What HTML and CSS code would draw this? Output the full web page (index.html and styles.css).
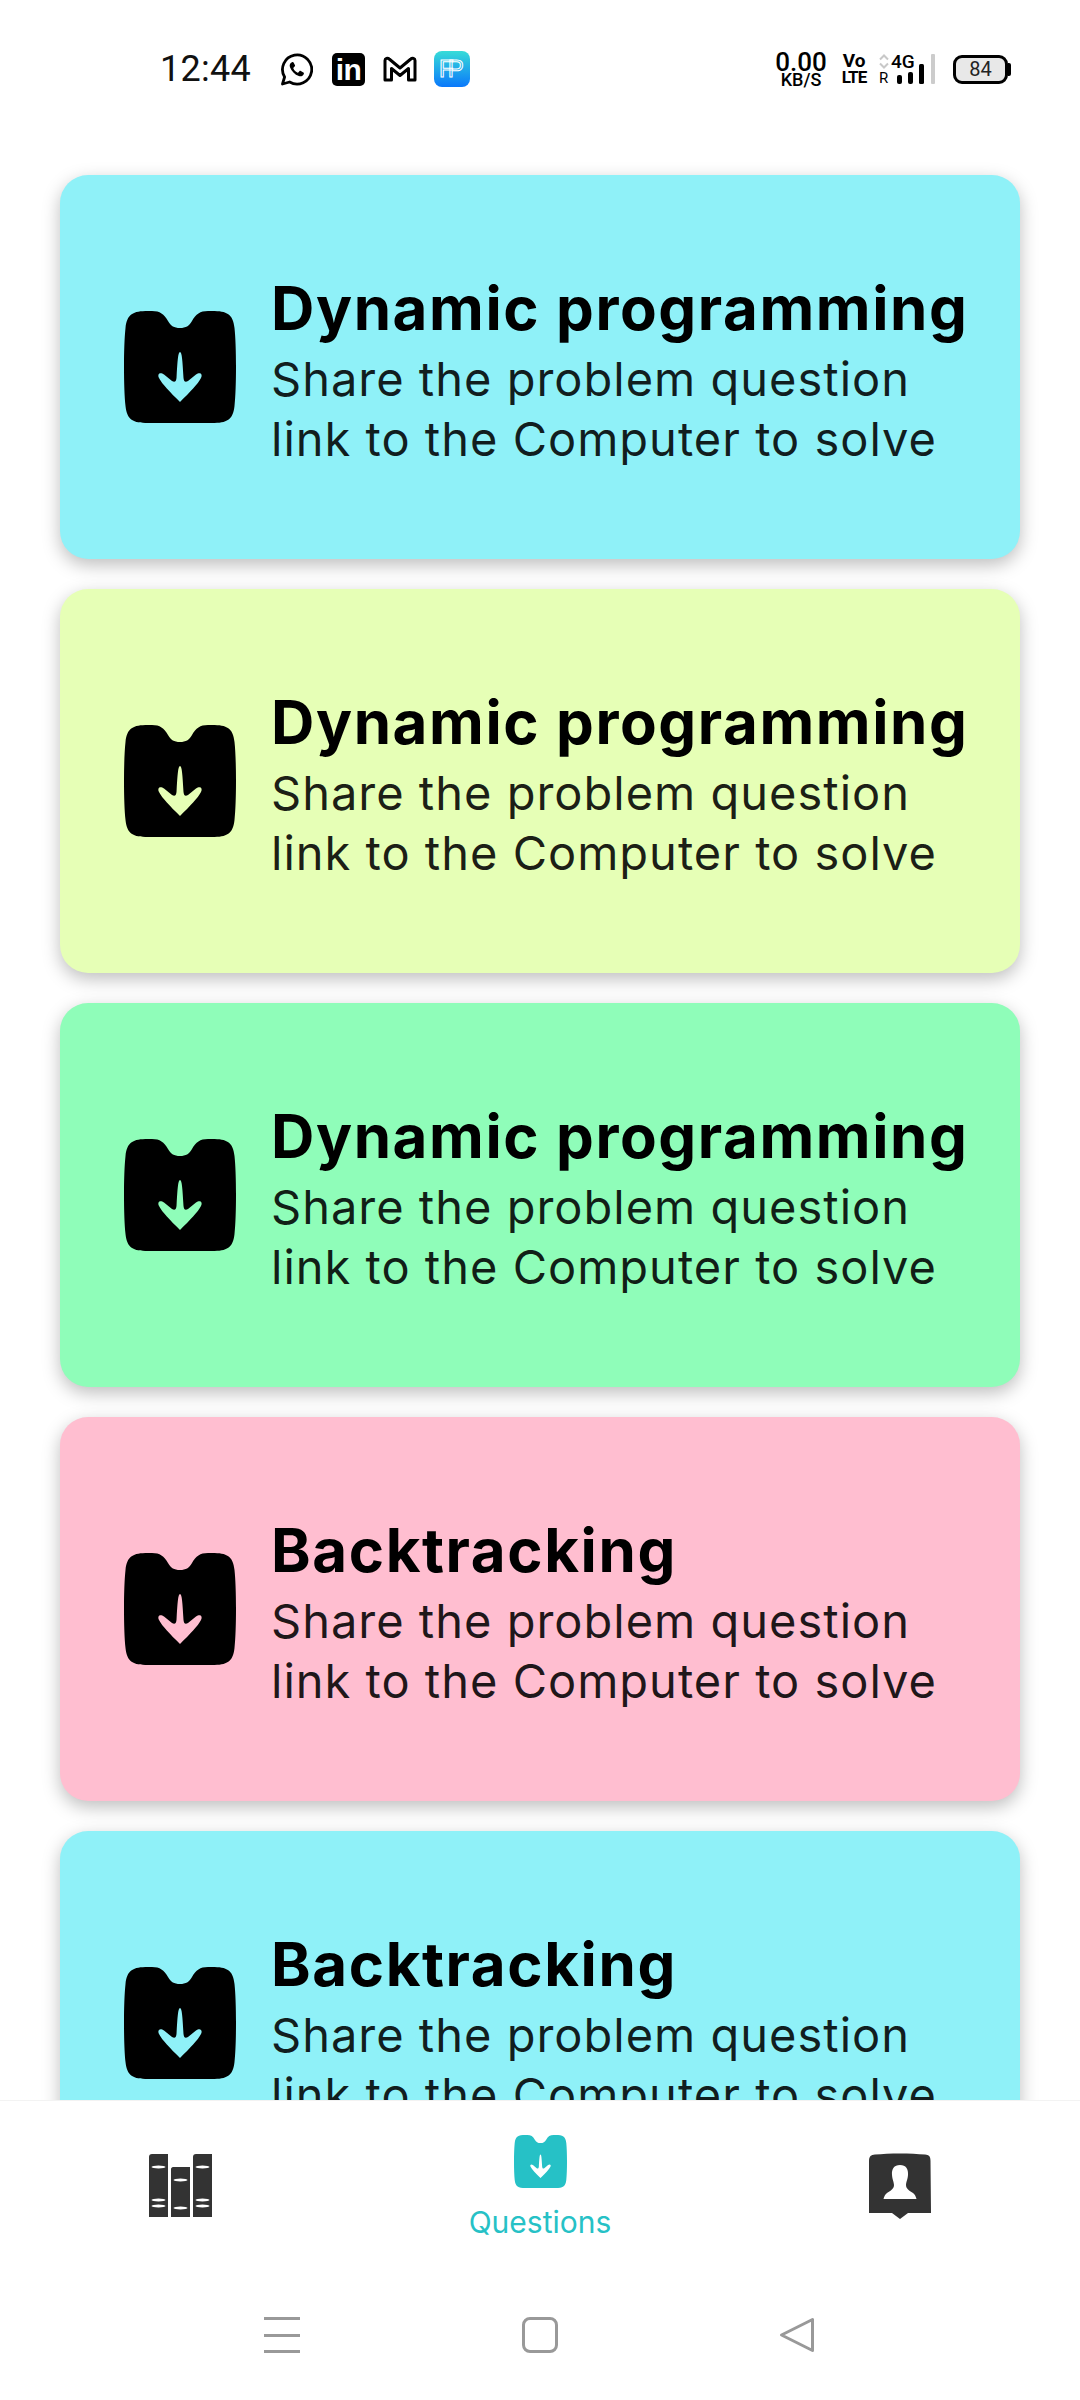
FILE: index.html
```html
<!DOCTYPE html>
<html>
<head>
  <meta charset="utf-8">
  <title>Questions</title>
  <link rel="stylesheet" href="styles.css">
</head>
<body>

  <svg class="defs" width="0" height="0">
    <symbol id="icon-question" viewBox="0 0 112 112">
      <path class="icon-body" d="M56 17C50 17 47 15 44 10C40 3 36 0 28 0H24C9 0 3 3 1.5 17C-.5 35-.5 77 1.5 95C3 109 9 112 24 112H88C103 112 109 109 110.5 95C112.5 77 112.5 35 110.5 17C109 3 103 0 88 0H84C76 0 72 3 68 10C65 15 62 17 56 17Z"/>
      <path class="icon-arrow" d="M56 41C58 41 58.5 50 59.5 67C60 71 61.5 71.5 64 70L72 63.5C76 60.5 79 63 77 67C74 73 66 81 56 91C46 81 38 73 35 67C33 63 36 60.5 40 63.5L48 70C50.5 71.5 52 71 52.5 67C53.5 50 54 41 56 41Z"/>
    </symbol>
  </svg>

  <div class="phone">

    <div class="status">
      <div class="status-left">
        <span class="time">12:44</span>
        <svg class="ic-whatsapp" width="33" height="33" viewBox="0 0 33 33">
          <path d="M2.5 31L4.6 24A14.6 14.6 0 1 1 9.6 29Z" fill="none" stroke="#000" stroke-width="2.8" stroke-linejoin="round"/>
          <path d="M12 9.2C10 10 9.2 12 10 14.2C11.4 18.2 14.8 21.6 18.8 23C21 23.8 23 23 23.8 21C24.1 20.2 24 19.8 23.4 19.4L20.8 18C20.2 17.7 19.8 17.8 19.4 18.3L18.6 19.3C18.2 19.7 17.8 19.8 17.3 19.5C15.6 18.6 14.4 17.4 13.5 15.7C13.2 15.2 13.3 14.8 13.7 14.4L14.6 13.6C15.1 13.2 15.2 12.8 15 12.2L13.6 9.6C13.2 9 12.8 8.9 12 9.2Z"/>
        </svg>
        <span class="ic-linkedin">in</span>
        <svg class="ic-gmail" width="34" height="26" viewBox="0 0 34 26">
          <path d="M2 24V4.5C2 2.2 4.6 1.6 6.2 3L17 12L27.8 3C29.4 1.6 32 2.2 32 4.5V24H25.5V12.5L17 19.5L8.5 12.5V24Z" fill="#fff" stroke="#000" stroke-width="3" stroke-linejoin="round"/>
        </svg>
        <span class="ic-fp">FP</span>
      </div>
      <div class="status-right">
        <div class="speed">
          <span class="speed-num">0.00</span>
          <span class="speed-unit">KB/S</span>
        </div>
        <div class="volte">
          <span>Vo</span>
          <span class="volte-lte">LTE</span>
        </div>
        <div class="net">
          <div class="net-left">
            <svg width="10" height="15" viewBox="0 0 10 15">
              <path d="M1 5.5L5 1.5L9 5.5M1 9.5L5 13.5L9 9.5" fill="none" stroke="#c8c8c8" stroke-width="2"/>
            </svg>
            <span class="net-r">R</span>
          </div>
          <div class="net-mid">
            <span class="net-4g">4G</span>
            <svg width="30" height="20" viewBox="0 0 30 20">
              <rect x="0" y="11" width="5" height="9" rx="2"/>
              <rect x="11" y="8" width="5" height="12" rx="2"/>
              <rect x="22" y="0" width="5" height="20" rx="1.5"/>
            </svg>
          </div>
          <span class="net-empty"></span>
        </div>
        <div class="battery">
          <span class="battery-level">84</span>
        </div>
      </div>
    </div>

    <div class="list">
      <div class="card card-cyan">
        <svg class="card-icon"><use href="#icon-question"/></svg>
        <div class="card-text">
          <h3>Dynamic programming</h3>
          <p>Share the problem question<br>link to the Computer to solve</p>
        </div>
      </div>
      <div class="card card-lime">
        <svg class="card-icon"><use href="#icon-question"/></svg>
        <div class="card-text">
          <h3>Dynamic programming</h3>
          <p>Share the problem question<br>link to the Computer to solve</p>
        </div>
      </div>
      <div class="card card-green">
        <svg class="card-icon"><use href="#icon-question"/></svg>
        <div class="card-text">
          <h3>Dynamic programming</h3>
          <p>Share the problem question<br>link to the Computer to solve</p>
        </div>
      </div>
      <div class="card card-pink">
        <svg class="card-icon"><use href="#icon-question"/></svg>
        <div class="card-text">
          <h3>Backtracking</h3>
          <p>Share the problem question<br>link to the Computer to solve</p>
        </div>
      </div>
      <div class="card card-cyan">
        <svg class="card-icon"><use href="#icon-question"/></svg>
        <div class="card-text">
          <h3>Backtracking</h3>
          <p>Share the problem question<br>link to the Computer to solve</p>
        </div>
      </div>
    </div>

    <div class="tabs">
      <div class="tab">
        <svg width="63" height="63" viewBox="0 0 63 63">
          <path d="M0 63V3C0 1 1 0 3 0H19V63Z" fill="#333"/>
          <path d="M22 63V15C22 14 23 13 24 13H41V63Z" fill="#333"/>
          <path d="M44 63V3C44 1 45 0 47 0H63V63Z" fill="#333"/>
          <g fill="#fff">
            <ellipse cx="9.5" cy="13" rx="7" ry="1.4"/>
            <ellipse cx="9.5" cy="46" rx="7" ry="1.4"/>
            <ellipse cx="9.5" cy="52" rx="7" ry="1.4"/>
            <ellipse cx="31.5" cy="26" rx="7" ry="1.4"/>
            <ellipse cx="31.5" cy="54" rx="7" ry="1.4"/>
            <ellipse cx="53.5" cy="13" rx="7" ry="1.4"/>
            <ellipse cx="53.5" cy="46" rx="7" ry="1.4"/>
            <ellipse cx="53.5" cy="52" rx="7" ry="1.4"/>
          </g>
        </svg>
      </div>
      <div class="tab tab-active">
        <svg class="tab-icon"><use href="#icon-question"/></svg>
        <span class="tab-label">Questions</span>
      </div>
      <div class="tab">
        <svg width="62" height="66" viewBox="0 0 62 66">
          <path d="M0 60V8C0 3 2 2 6 1.5C20 0 42 0 56 1.5C60 2 61.5 3 61.5 8L62 60H39L31 66L23 60Z" fill="#333"/>
          <path d="M31 12C37 12 39.5 16 39 22C38.6 27 37 29 37 32C37 36 41 38 44 40C46 41.5 47 44 47.5 46H14.5C15 44 16 41.5 18 40C21 38 25 36 25 32C25 29 23.4 27 23 22C22.5 16 25 12 31 12Z" fill="#fff"/>
        </svg>
      </div>
    </div>

    <div class="sysnav">
      <div class="sys-menu"><span></span><span></span><span></span></div>
      <div class="sys-home"></div>
      <svg width="36" height="36" viewBox="0 0 36 36">
        <path d="M33.5 2.5V33.5L2.5 18Z" fill="none" stroke="#999" stroke-width="3" stroke-linejoin="round"/>
      </svg>
    </div>

  </div>

</body>
</html>
```

FILE: styles.css
```css
* {
  box-sizing: border-box;
}

body {
  margin: 0;
  background: #fff;
  font-family: Inter, "Noto Sans", sans-serif;
}

.defs {
  position: absolute;
}

.phone {
  width: 1080px;
  height: 2400px;
  display: flex;
  flex-direction: column;
  overflow: hidden;
}

/* barra de status */
.status {
  flex: none;
  height: 88px;
  padding: 50px 69px 0 160px;
  display: flex;
  justify-content: space-between;
  align-items: center;
  font-family: Roboto, sans-serif;
  color: #000;
}

.status-left {
  display: flex;
  align-items: center;
}

.time {
  width: 120px;
  font-size: 36px;
  letter-spacing: 0.3px;
  color: #111;
}

.ic-linkedin {
  width: 33px;
  height: 33px;
  margin-left: 19px;
  background: #000;
  border-radius: 5px;
  color: #fff;
  font: bold 30px/33px "Liberation Sans", sans-serif;
  text-align: center;
  letter-spacing: -0.5px;
}

.ic-gmail {
  margin-left: 18px;
}

.ic-fp {
  width: 36px;
  height: 36px;
  margin-left: 17px;
  border-radius: 8px;
  background: linear-gradient(#37dcd8, #0a78fb);
  color: transparent;
  -webkit-text-stroke: 1px #fff;
  font: 24px/36px "Liberation Sans", sans-serif;
  letter-spacing: -6px;
  padding-left: 5px;
}

.status-right {
  display: flex;
  align-items: center;
}

.speed {
  display: flex;
  flex-direction: column;
  align-items: center;
  width: 52px;
}

.speed-num {
  font-size: 26px;
  line-height: 20px;
  font-weight: 500;
}

.speed-unit {
  font-size: 18px;
  line-height: 15px;
  font-weight: 500;
}

.volte {
  display: flex;
  flex-direction: column;
  align-items: center;
  width: 22px;
  margin-left: 16px;
  font-size: 19px;
  line-height: 16px;
  font-weight: 700;
}

.volte-lte {
  font-size: 17px;
  letter-spacing: -1px;
}

.net {
  display: flex;
  align-items: stretch;
  height: 30px;
  margin-left: 14px;
}

.net-left {
  display: flex;
  flex-direction: column;
  justify-content: space-between;
  width: 10px;
}

.net-r {
  font-size: 15px;
  line-height: 12px;
}

.net-mid {
  display: flex;
  flex-direction: column;
  align-items: flex-start;
  width: 30px;
  margin-left: 8px;
  position: relative;
}

.net-mid svg {
  position: absolute;
  left: 0;
  bottom: 0;
}

.net-4g {
  margin-left: -6px;
  font-size: 19px;
  line-height: 15px;
  font-weight: 500;
}

.net-empty {
  width: 4px;
  margin-left: 4px;
  background: #ccc;
  border-radius: 1px;
}

.battery {
  position: relative;
  width: 55px;
  height: 29px;
  margin: 0 3px 0 18px;
  border: 3px solid #000;
  border-radius: 9px;
  background: #e8e8e8;
  display: flex;
  align-items: center;
  justify-content: center;
}

/* pontinha da bateria */
.battery::after {
  content: "";
  position: absolute;
  right: -6px;
  top: 5px;
  width: 3px;
  height: 13px;
  background: #000;
  border-radius: 0 2px 2px 0;
}

.battery-level {
  font-size: 20px;
  color: #222;
}

/* lista de cards */
.list {
  flex: 1;
  min-height: 0;
  overflow: hidden;
  padding: 87px 60px 0;
  display: flex;
  flex-direction: column;
  gap: 30px;
}

.card {
  flex: none;
  height: 384px;
  padding: 0 20px 0 64px;
  display: flex;
  align-items: center;
  gap: 35px;
  border-radius: 28px;
  background: var(--card-color);
  box-shadow: 0 6px 18px rgba(0, 0, 0, 0.26);
}

.card-cyan { --card-color: #8ff1f8; }
.card-lime { --card-color: #e6ffb6; }
.card-green { --card-color: #8ffdb9; }
.card-pink { --card-color: #ffbed0; }

.card-icon {
  flex: none;
  width: 112px;
  height: 112px;
  --icon-color: #000;
  --arrow-color: var(--card-color);
}

.icon-body {
  fill: var(--icon-color);
}

.icon-arrow {
  fill: var(--arrow-color);
}

.card-text {
  padding-top: 6px;
}

.card-text h3 {
  margin: 0 0 5px;
  font-size: 60px;
  line-height: 72px;
  font-weight: 700;
  letter-spacing: 1.6px;
  color: #000;
}

.card-text p {
  margin: 0;
  font-size: 47px;
  line-height: 60px;
  letter-spacing: 1px;
  color: rgba(0, 0, 0, 0.88);
}

/* abas de baixo */
.tabs {
  flex: none;
  height: 170px;
  display: grid;
  grid-template-columns: repeat(3, 1fr);
  align-items: center;
  background: #fff;
  border-top: 1px solid #f3f3f3;
}

.tab {
  display: flex;
  flex-direction: column;
  align-items: center;
}

.tab-active {
  padding-top: 3px;
}

.tab-icon {
  width: 53px;
  height: 53px;
  --icon-color: #26c1c6;
  --arrow-color: #fff;
}

.tab-label {
  margin-top: 16px;
  font-size: 30px;
  line-height: 36px;
  color: #26c1c6;
}

/* navegacao do sistema */
.sysnav {
  flex: none;
  height: 130px;
  padding: 0 265px 0 264px;
  display: flex;
  justify-content: space-between;
  align-items: center;
  background: #fff;
}

.sys-menu {
  width: 36px;
  height: 36px;
  display: flex;
  flex-direction: column;
  justify-content: space-between;
}

.sys-menu span {
  height: 3px;
  background: #999;
}

.sys-home {
  width: 36px;
  height: 36px;
  border: 3px solid #999;
  border-radius: 8px;
}
```
